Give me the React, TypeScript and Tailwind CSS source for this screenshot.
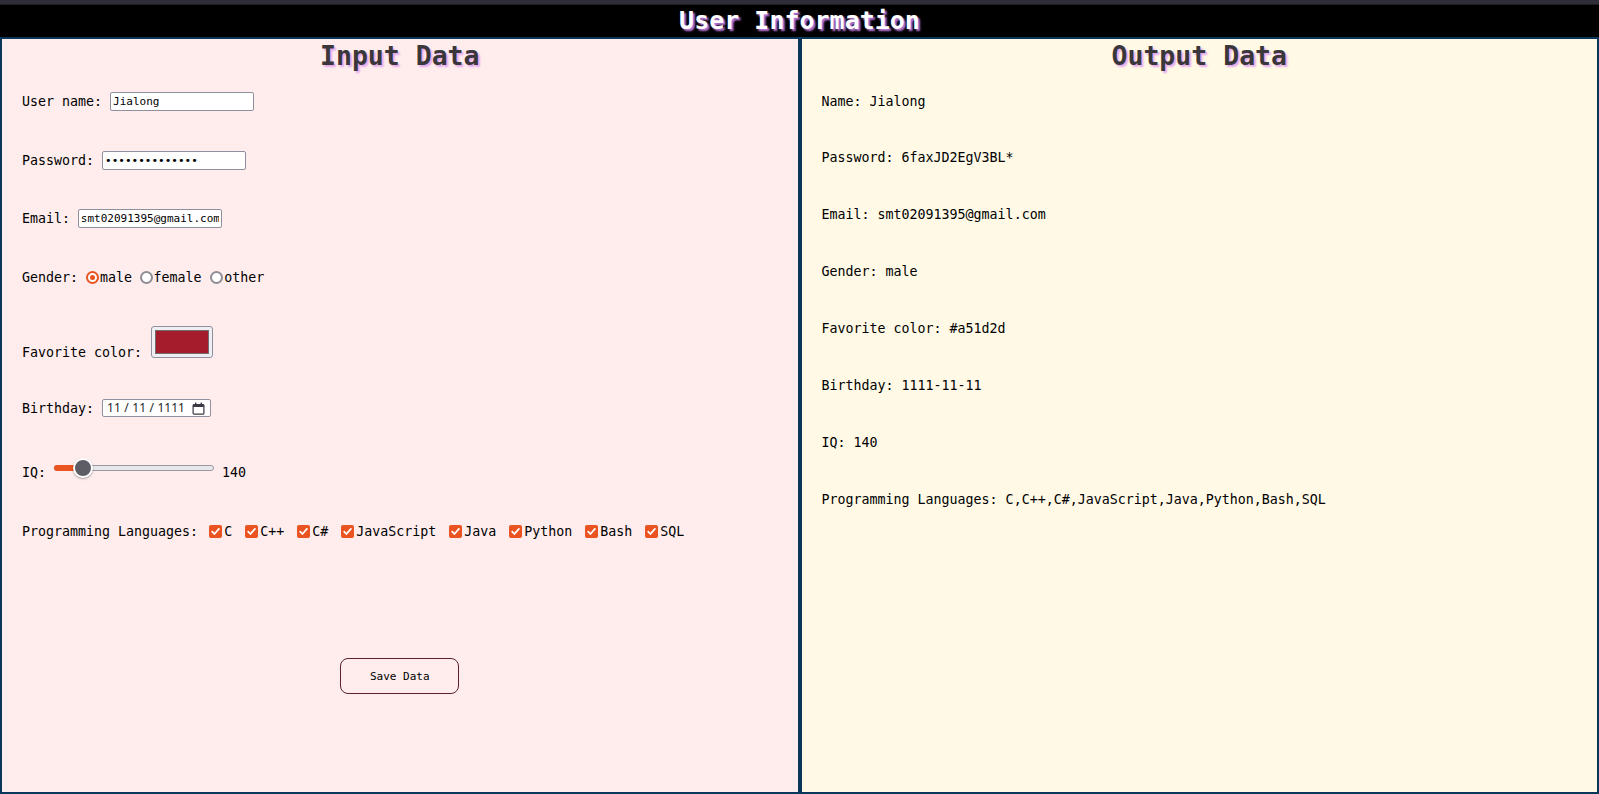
import React from "react";

const Check = () => (
  <span className="flex h-[13px] w-[13px] shrink-0 items-center justify-center rounded-[2px] bg-[#e95420]">
    <svg width="11" height="11" viewBox="0 0 11 11">
      <path d="M2.2 5.7 L4.4 8 L8.9 2.9" fill="none" stroke="white" strokeWidth="1.8" strokeLinecap="round" strokeLinejoin="round" />
    </svg>
  </span>
);

const Radio = ({ checked }: { checked?: boolean }) =>
  checked ? (
    <span className="flex h-[13px] w-[13px] shrink-0 items-center justify-center rounded-full border-2 border-[#e95420] bg-white">
      <span className="block h-[5px] w-[5px] rounded-full bg-[#e95420]" />
    </span>
  ) : (
    <span className="block h-[13px] w-[13px] shrink-0 rounded-full border-2 border-[#8e8d95] bg-white" />
  );

const langs = ["C", "C++", "C#", "JavaScript", "Java", "Python", "Bash", "SQL"];

const inputCls =
  "h-[19px] w-[144px] rounded-[2px] border border-[#8f8f9d] bg-white px-[2px] text-[11px] leading-[17px] text-black outline-none font-['DejaVu_Sans_Mono',monospace]";

export default function App() {
  return (
    <div className="flex h-[794px] w-full flex-col overflow-hidden bg-black text-[13.3px] leading-[15px] text-black font-['DejaVu_Sans_Mono',monospace]">
      <div className="h-[5px] w-full shrink-0 border-b border-[#1e1d24] bg-[#2f2d38]" />
      <div className="flex h-[32px] shrink-0 items-center justify-center bg-black">
        <h1 className="text-[25px] font-bold leading-[32px] text-white [text-shadow:2px_2px_2px_#c27be0]">
          User Information
        </h1>
      </div>
      <div className="flex min-h-0 flex-1">
        {/* Input panel */}
        <div className="flex w-1/2 flex-col border-2 border-[#08375a] bg-[#ffeded] pl-[20px]">
          <div className="flex h-[34px] shrink-0 items-center justify-center pr-[20px]">
            <h2 className="text-[26.5px] font-bold leading-[30px] text-[#393739] [text-shadow:2px_2px_2px_#e3a6ec]">
              Input Data
            </h2>
          </div>
          <div className="flex h-[56px] items-center">
            <span>User name:</span>
            <input className={`${inputCls} ml-[8px]`} defaultValue="Jialong" />
          </div>
          <div className="flex h-[62px] items-center">
            <span>Password:</span>
            <input type="password" className={`${inputCls} ml-[8px]`} defaultValue="6faxJD2EgV3BL*" />
          </div>
          <div className="flex h-[55px] items-center">
            <span>Email:</span>
            <input className={`${inputCls} ml-[7.75px]`} defaultValue="smt02091395@gmail.com" />
          </div>
          <div className="flex h-[62px] items-center">
            <span>Gender:</span>
            <span className="ml-[8px]"><Radio checked /></span>
            <span className="ml-[1px]">male</span>
            <span className="ml-[7.5px]"><Radio /></span>
            <span className="ml-[1px]">female</span>
            <span className="ml-[8.5px]"><Radio /></span>
            <span className="ml-[1px]">other</span>
          </div>
          <div className="flex h-[68px] items-end pb-[16px]">
            <span>Favorite color:</span>
            <div className="mb-[2px] ml-[9px] flex h-[32px] w-[62px] rounded-[3px] border border-[#8f8f9d] bg-[#efeff1] p-[3px]">
              <div className="h-full w-full border border-[#6f6d73] bg-[#a51d2d]" />
            </div>
          </div>
          <div className="flex h-[64px] items-center">
            <span>Birthday:</span>
            <div className="ml-[8px] flex h-[18px] w-[109px] items-center rounded-[2px] border border-[#8f8f9d] bg-white pl-[4px] text-[12px] text-[#1f1f1f] font-['Noto_Sans',sans-serif]">
              <span className="flex items-center gap-[3.5px] leading-[16px]">
                <span>11</span>
                <span>/</span>
                <span>11</span>
                <span>/</span>
                <span>1111</span>
              </span>
              <svg className="ml-[7px]" width="13" height="13" viewBox="0 0 13 13">
                <rect x="1.1" y="2.6" width="10.8" height="9.6" rx="1" fill="none" stroke="#3d3846" strokeWidth="1.2" />
                <rect x="1.1" y="2.6" width="10.8" height="2.4" fill="#3d3846" />
                <rect x="3" y="0.6" width="1.4" height="3" fill="#3d3846" />
                <rect x="8.6" y="0.6" width="1.4" height="3" fill="#3d3846" />
              </svg>
            </div>
          </div>
          <div className="flex h-[65px] items-center">
            <span>IQ:</span>
            <div className="relative mb-[9px] ml-[8px] flex h-[20px] w-[160px] items-center">
              <div className="h-[6px] w-full rounded-full border border-[#9a99a2] bg-[#e8e8ec]" />
              <div className="absolute left-0 top-[7px] h-[6px] w-[24px] rounded-l-full bg-[#e95420]" />
              <div className="absolute left-[19px] top-0 h-[20px] w-[20px] rounded-full border-2 border-white bg-[#5e5c64] shadow-[0_1px_2px_rgba(0,0,0,0.35)]" />
            </div>
            <span className="ml-[8px]">140</span>
          </div>
          <div className="flex h-[52px] items-center">
            <span>Programming Languages:</span>
            {langs.map((l, i) => (
              <React.Fragment key={l}>
                <span className={i === 0 ? "ml-[11px]" : "ml-[13px]"}>
                  <Check />
                </span>
                <span className="ml-[2px]">{l}</span>
              </React.Fragment>
            ))}
          </div>
          <div className="flex justify-center pr-[20px] pt-[101px]">
            <button className="h-[36px] w-[119px] rounded-[8px] border border-[#5b1f31] bg-transparent text-[11px] text-black font-['DejaVu_Sans_Mono',monospace]">
              Save Data
            </button>
          </div>
        </div>
        {/* Output panel */}
        <div className="flex w-1/2 flex-col border-2 border-[#08375a] bg-[#fff9e6] pl-[20px]">
          <div className="flex h-[34px] shrink-0 items-center justify-center pr-[20px]">
            <h2 className="text-[26.5px] font-bold leading-[30px] text-[#393739] [text-shadow:2px_2px_2px_#e3a6ec]">
              Output Data
            </h2>
          </div>
          <div className="flex h-[56px] items-center">Name: Jialong</div>
          <div className="flex h-[57px] items-center">Password: 6faxJD2EgV3BL*</div>
          <div className="flex h-[57px] items-center">Email: smt02091395@gmail.com</div>
          <div className="flex h-[57px] items-center">Gender: male</div>
          <div className="flex h-[57px] items-center">Favorite color: #a51d2d</div>
          <div className="flex h-[57px] items-center">Birthday: 1111-11-11</div>
          <div className="flex h-[57px] items-center">IQ: 140</div>
          <div className="flex h-[57px] items-center">
            Programming Languages: C,C++,C#,JavaScript,Java,Python,Bash,SQL
          </div>
        </div>
      </div>
    </div>
  );
}
